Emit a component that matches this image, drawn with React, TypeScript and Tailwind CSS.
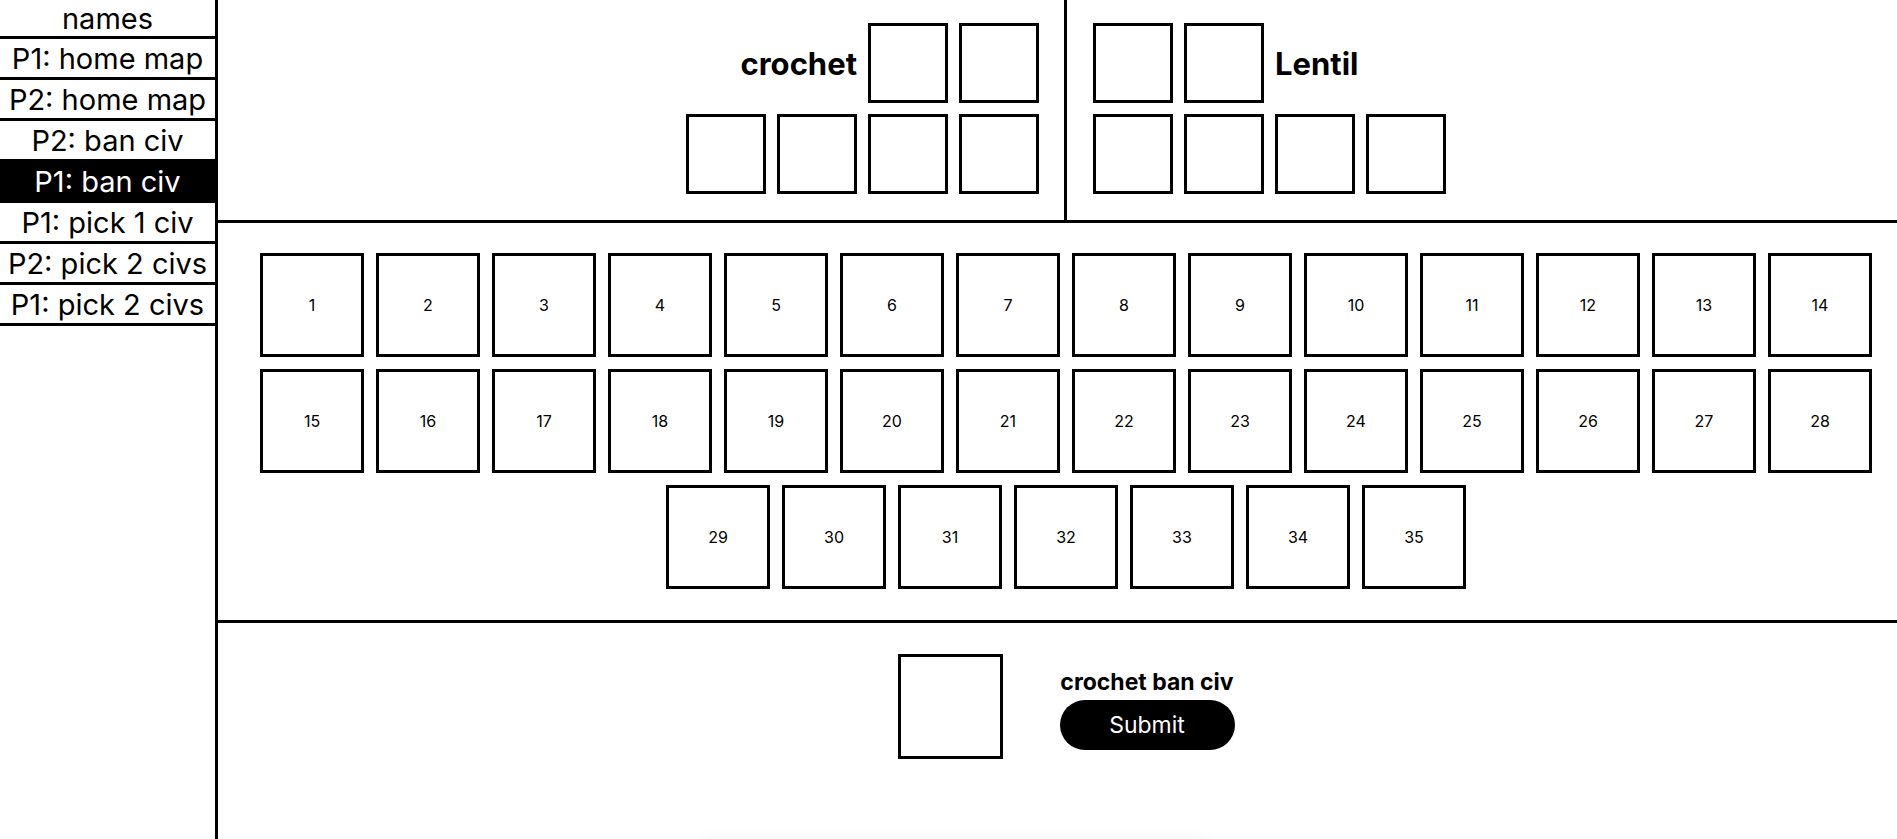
import type { ReactNode } from "react";

const steps = [
  "P1: home map",
  "P2: home map",
  "P2: ban civ",
  "P1: ban civ",
  "P1: pick 1 civ",
  "P2: pick 2 civs",
  "P1: pick 2 civs",
];

const activeStep = 3;

function Slot({ className, children }: { className?: string; children?: ReactNode }) {
  return (
    <div
      className={`flex shrink-0 items-center justify-center border-[3px] border-black bg-white ${className ?? ""}`}
    >
      {children}
    </div>
  );
}

function Sidebar() {
  return (
    <aside className="flex h-screen w-[218px] shrink-0 flex-col border-r-[3px] border-black">
      <div className="flex h-[39px] items-center justify-center border-b-[3px] border-black text-[29px] leading-none">
        names
      </div>
      {steps.map((step, i) => (
        <div
          key={step}
          className={`flex h-[41px] items-center justify-center border-b-[3px] border-black text-[29px] leading-none ${
            i === activeStep ? "bg-black text-white" : "bg-white text-black"
          }`}
        >
          {step}
        </div>
      ))}
    </aside>
  );
}

function PlayerPanel({ name, side }: { name: string; side: "left" | "right" }) {
  const isLeft = side === "left";
  return (
    <div
      className={`flex flex-1 flex-col gap-[11px] pt-[23px] ${
        isLeft ? "items-end border-r-[3px] border-black pr-[25px]" : "items-start pl-[26px]"
      }`}
    >
      <div className="flex items-center gap-[11px]">
        {isLeft ? <span className="pt-[3px] text-[31px] font-bold">{name}</span> : null}
        <Slot className="size-[80px]" />
        <Slot className="size-[80px]" />
        {!isLeft ? <span className="pt-[3px] text-[31px] font-bold">{name}</span> : null}
      </div>
      <div className="flex gap-[11px]">
        {[0, 1, 2, 3].map((n) => (
          <Slot key={n} className="size-[80px]" />
        ))}
      </div>
    </div>
  );
}

function CivGrid() {
  const rows = [
    Array.from({ length: 14 }, (_, i) => i + 1),
    Array.from({ length: 14 }, (_, i) => i + 15),
    Array.from({ length: 7 }, (_, i) => i + 29),
  ];
  return (
    <section className="flex flex-col items-center gap-3 border-b-[3px] border-black pb-[31px] pl-[17px] pt-[30px]">
      {rows.map((row, r) => (
        <div key={r} className="flex gap-3">
          {row.map((n) => (
            <Slot key={n} className="size-[104px] text-[16px]">
              {n}
            </Slot>
          ))}
        </div>
      ))}
    </section>
  );
}

export default function App() {
  return (
    <div
      className="flex h-screen overflow-hidden bg-white text-black"
      style={{ fontFamily: "Inter, 'Noto Sans', sans-serif" }}
    >
      <Sidebar />
      <main className="relative flex flex-1 flex-col">
        <section className="flex h-[223px] border-b-[3px] border-black pl-[17px]">
          <PlayerPanel name="crochet" side="left" />
          <PlayerPanel name="Lentil" side="right" />
        </section>

        <CivGrid />

        <section className="flex justify-center gap-[57px] pl-[17px] pt-[31px]">
          <Slot className="size-[105px]" />
          <div className="flex w-[175px] flex-col items-center gap-[3px] pt-[14px]">
            <span className="text-[23px] font-bold leading-tight">crochet ban civ</span>
            <button className="h-[50px] w-[175px] rounded-full bg-black text-[23px] text-white">
              Submit
            </button>
          </div>
        </section>

        <div className="absolute bottom-[-44px] left-[482px] h-[40px] w-[510px] rounded-lg bg-white shadow-[0_0_18px_rgba(0,0,0,0.08)]" />
      </main>
    </div>
  );
}
